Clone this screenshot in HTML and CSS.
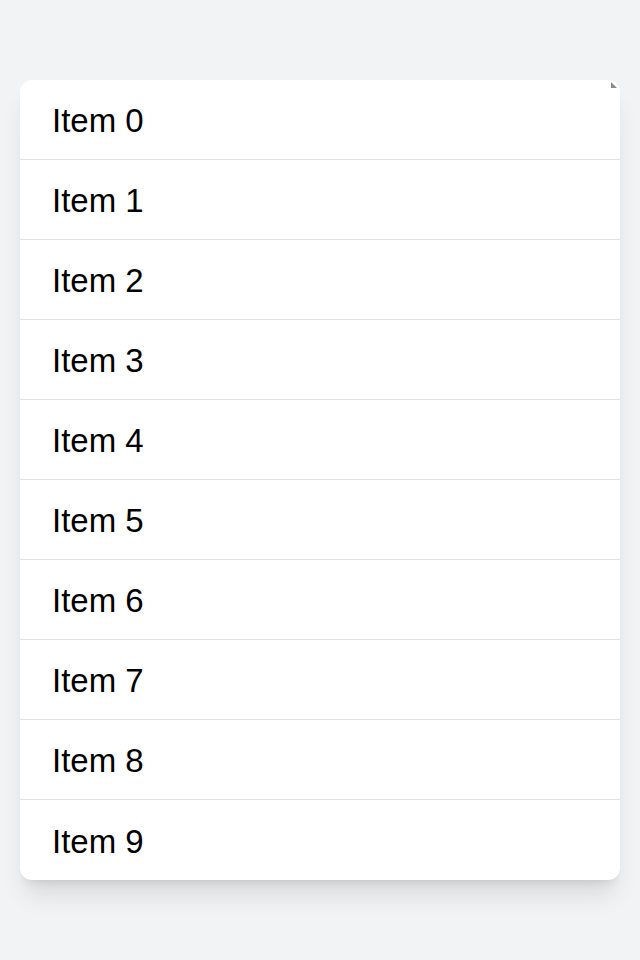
FILE: index.html
```html
<!DOCTYPE html>
<html>
<head>
<meta charset="utf-8">
<link rel="stylesheet" href="styles.css">
</head>
<body>
<div class="page">
  <div class="card">
    <ul class="list">
      <li class="row">Item 0</li>
      <li class="row">Item 1</li>
      <li class="row">Item 2</li>
      <li class="row">Item 3</li>
      <li class="row">Item 4</li>
      <li class="row">Item 5</li>
      <li class="row">Item 6</li>
      <li class="row">Item 7</li>
      <li class="row">Item 8</li>
      <li class="row">Item 9</li>
    </ul>
    <svg class="corner" width="6" height="6" viewBox="0 0 6 6"><polygon points="0,0 0,6 6,6" fill="#8a8a8a"/></svg>
  </div>
</div>
</body>
</html>
```
FILE: styles.css
```css
html, body {
  margin: 0;
  padding: 0;
  background: #f2f3f5;
  font-family: "Liberation Sans", Arial, sans-serif;
}
.page {
  padding: 80px 20px;
}
.card {
  position: relative;
  background: #ffffff;
  border-radius: 12px;
  overflow: hidden;
  box-shadow: 0 20px 25px -5px rgba(0,0,0,0.1), 0 8px 10px -6px rgba(0,0,0,0.1);
}
.list {
  list-style: none;
  margin: 0;
  padding: 0;
}
.row {
  box-sizing: border-box;
  height: 80px;
  border-bottom: 1px solid #e2e2e2;
  display: flex;
  align-items: center;
  padding: 3px 32px 0 32px;
  font-size: 33px;
  color: #000000;
}
.row:last-child {
  border-bottom: none;
}
.corner {
  position: absolute;
  top: 2px;
  right: 3px;
  display: block;
}
```
